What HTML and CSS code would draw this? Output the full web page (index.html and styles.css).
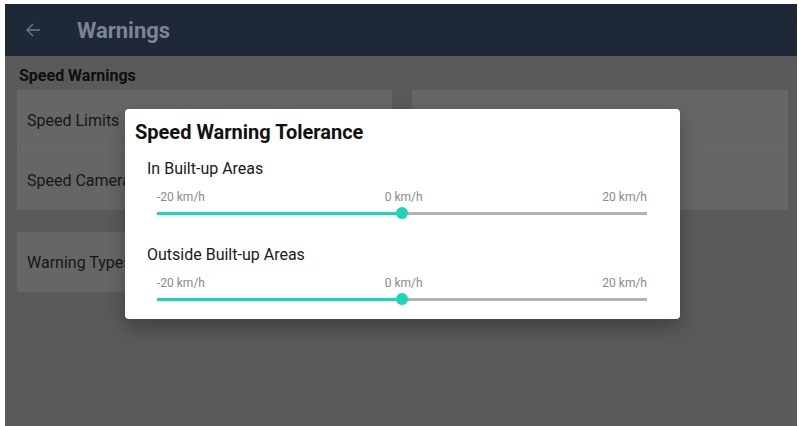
FILE: index.html
```html
<!DOCTYPE html>
<html lang="en">
<head>
  <meta charset="UTF-8">
  <title>Warnings</title>
  <link rel="stylesheet" href="styles.css">
</head>
<body>
  <div class="app">
    <header class="top-bar">
      <svg class="back-icon" width="16" height="16" viewBox="0 0 16 16">
        <path d="M15 8H2M8 2L2 8l6 6" fill="none" stroke="currentColor" stroke-width="1.4"/>
      </svg>
      <h1 class="page-title">Warnings</h1>
    </header>

    <main class="content">
      <h2 class="group-title">Speed Warnings</h2>
      <div class="card-grid">
        <div class="card">
          <div class="row">Speed Limits</div>
          <div class="row">Speed Cameras</div>
        </div>
        <div class="card">
          <div class="row"></div>
          <div class="row"></div>
        </div>
        <div class="card">
          <div class="row">Warning Types</div>
        </div>
      </div>
    </main>

    <div class="scrim">
      <div class="dialog">
        <h3 class="dialog-title">Speed Warning Tolerance</h3>

        <div class="section">
          <div class="section-label">In Built-up Areas</div>
          <div class="slider-block">
            <div class="ticks">
              <span>-20 km/h</span>
              <span>0 km/h</span>
              <span>20 km/h</span>
            </div>
            <div class="slider">
              <div class="track"></div>
              <div class="fill" style="width: 50%;"></div>
              <div class="thumb" style="left: 50%;"></div>
            </div>
          </div>
        </div>

        <div class="section">
          <div class="section-label">Outside Built-up Areas</div>
          <div class="slider-block">
            <div class="ticks">
              <span>-20 km/h</span>
              <span>0 km/h</span>
              <span>20 km/h</span>
            </div>
            <div class="slider">
              <div class="track"></div>
              <div class="fill" style="width: 50%;"></div>
              <div class="thumb" style="left: 50%;"></div>
            </div>
          </div>
        </div>
      </div>
    </div>
  </div>
</body>
</html>
```

FILE: styles.css
```css
html, body {
  margin: 0;
  padding: 0;
}

body {
  background: #fff;
  font-family: Roboto, "Liberation Sans", Arial, sans-serif;
  color: #151515;
}

.app {
  position: relative;
  margin: 4px 2px 0 5px;
  height: 422px;
  background: #5a5a5a;
  overflow: hidden;
}

.top-bar {
  height: 53px;
  background: #1e2836;
  border-bottom: 1px solid #50565c;
  display: flex;
  align-items: center;
  padding-left: 20px;
  box-sizing: border-box;
}

.back-icon {
  color: #6f7985;
}

.page-title {
  margin: 0 0 0 36px;
  font-size: 22px;
  font-weight: 700;
  color: #7b8592;
}

.content {
  padding: 0 9px 0 12px;
}

.group-title {
  margin: 0;
  padding: 10px 0 0 2px;
  height: 23px;
  font-size: 16px;
  font-weight: 700;
  line-height: 18px;
  color: #0e0e0e;
}

.card-grid {
  display: grid;
  grid-template-columns: 375px 376px;
  column-gap: 20px;
  row-gap: 22px;
}

.card {
  background: #666;
}

.row {
  height: 60px;
  display: flex;
  align-items: center;
  padding-left: 10px;
  font-size: 16px;
  color: #161616;
}

.row + .row {
  border-top: 1px solid #6c6c6c;
  height: 59px;
}

/* modal layer */
.scrim {
  position: absolute;
  inset: 0;
  display: flex;
  align-items: center;
  justify-content: center;
}

.dialog {
  width: 555px;
  height: 210px;
  box-sizing: border-box;
  margin-left: 3px;
  margin-top: -2px;
  background: #fff;
  border-radius: 4px;
  box-shadow: 0 8px 20px rgba(0, 0, 0, 0.3);
  padding: 11px 33px 0 10px;
}

.dialog-title {
  margin: 0;
  font-size: 20px;
  font-weight: 700;
  line-height: 24px;
  color: #111;
}

.section {
  margin-top: 15px;
  padding-left: 12px;
}

.section + .section {
  margin-top: 26px;
}

.section-label {
  font-size: 16px;
  line-height: 20px;
  color: #1a1a1a;
}

.slider-block {
  padding-left: 10px;
  margin-top: 10px;
}

.ticks {
  display: flex;
  justify-content: space-between;
  font-size: 12px;
  line-height: 16px;
  color: #8a8a8a;
}

.slider {
  position: relative;
  height: 12px;
  margin-top: 2px;
}

.track {
  position: absolute;
  left: 0;
  right: 0;
  top: 4.5px;
  height: 3px;
  background: #b2b2b2;
}

.fill {
  position: absolute;
  left: 0;
  top: 4.5px;
  height: 3px;
  background: #1dd3b9;
}

.thumb {
  position: absolute;
  top: 0;
  width: 12px;
  height: 12px;
  margin-left: -6px;
  border-radius: 50%;
  background: #1dd3b9;
}
```
